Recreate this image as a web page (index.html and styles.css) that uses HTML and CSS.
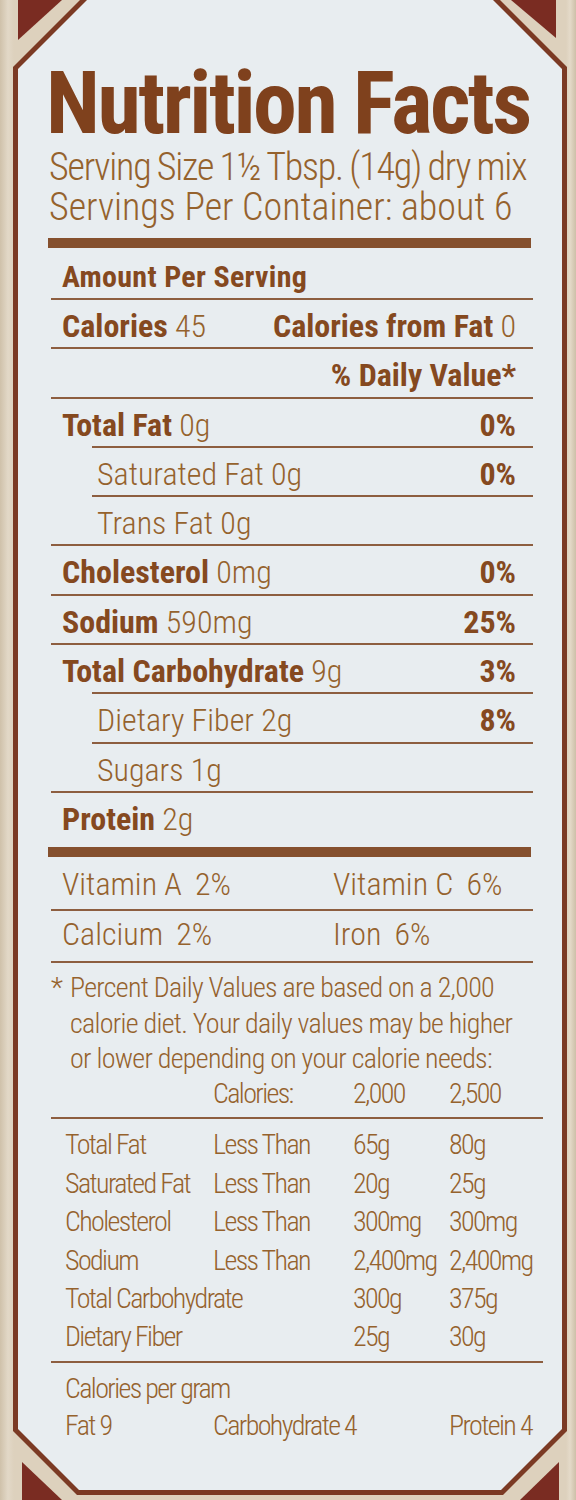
FILE: index.html
```
<!DOCTYPE html>
<html lang="en">
<head>
<meta charset="utf-8">
<title>Nutrition Facts</title>
<link rel="stylesheet" href="styles.css">
</head>
<body>
<div class="corner corner-tl"></div>
<div class="corner corner-tr"></div>
<div class="corner corner-bl"></div>
<div class="corner corner-br"></div>
<div class="frame">
  <div class="panel">
    <div class="content">
      <h1 class="title">Nutrition Facts</h1>
      <p class="serving serving-size">Serving Size 1½ Tbsp. (14g) dry mix</p>
      <p class="serving">Servings Per Container: about 6</p>
      <div class="bar"></div>
      <div class="amount">Amount Per Serving</div>
      <div class="row"><span><b>Calories</b> 45</span><span><b>Calories from Fat</b> 0</span></div>
      <div class="row dv"><span></span><b>% Daily Value*</b></div>
      <div class="row"><span><b>Total Fat</b> 0g</span><b class="pct">0%</b></div>
      <div class="row sub"><span>Saturated Fat 0g</span><b class="pct">0%</b></div>
      <div class="row sub"><span>Trans Fat 0g</span></div>
      <div class="row"><span><b>Cholesterol</b> 0mg</span><b class="pct">0%</b></div>
      <div class="row"><span><b>Sodium</b> 590mg</span><b class="pct">25%</b></div>
      <div class="row"><span><b>Total Carbohydrate</b> 9g</span><b class="pct">3%</b></div>
      <div class="row sub"><span>Dietary Fiber 2g</span><b class="pct">8%</b></div>
      <div class="row sub"><span>Sugars 1g</span></div>
      <div class="row last"><span><b>Protein</b> 2g</span></div>
      <div class="bar bar-low"></div>
      <div class="vit vit-first">
        <span class="vit-item">Vitamin A <span class="vit-val">2%</span></span>
        <span class="vit-item">Vitamin C <span class="vit-val">6%</span></span>
      </div>
      <div class="vit vit-second">
        <span class="vit-item">Calcium <span class="vit-val">2%</span></span>
        <span class="vit-item">Iron <span class="vit-val">6%</span></span>
      </div>
      <div class="foot">
        <div class="note"><span class="star">*</span><span class="note-text">Percent Daily Values are based on a 2,000<br>calorie diet. Your daily values may be higher<br>or lower depending on your calorie needs:</span></div>
        <div class="dvtable dvhead"><span></span><span>Calories:</span><span>2,000</span><span>2,500</span></div>
      </div>
      <div class="dvtable dvbody">
        <span>Total Fat</span><span>Less Than</span><span>65g</span><span>80g</span>
        <span>Saturated Fat</span><span>Less Than</span><span>20g</span><span>25g</span>
        <span>Cholesterol</span><span>Less Than</span><span>300mg</span><span>300mg</span>
        <span>Sodium</span><span>Less Than</span><span>2,400mg</span><span>2,400mg</span>
        <span class="span2">Total Carbohydrate</span><span>300g</span><span>375g</span>
        <span class="span2">Dietary Fiber</span><span>25g</span><span>30g</span>
      </div>
      <div class="pergram">
        <div class="pg-title">Calories per gram</div>
        <div class="dvtable pg-row"><span>Fat 9</span><span class="span2">Carbohydrate 4</span><span>Protein 4</span></div>
      </div>
    </div>
  </div>
</div>
</body>
</html>
```
FILE: styles.css
```
html, body {
  margin: 0;
  padding: 0;
}
body {
  position: relative;
  width: 576px;
  height: 1500px;
  overflow: hidden;
  background: linear-gradient(90deg, #cfc1aa 0, #e2d8c7 8px, #ddd1bd 14px, #ddd1bd 566px, #e4dac9 570px, #cdbfa8 576px);
  font-family: "Roboto", "Liberation Sans", sans-serif;
  font-stretch: condensed;
  color: #95622d;
}

.corner {
  position: absolute;
  background: #7a2c22;
}
.corner-tl { left: 18px; top: 0; width: 44px; height: 40px; clip-path: polygon(0 0, 100% 0, 0 100%); }
.corner-tr { left: 511px; top: 0; width: 45px; height: 38px; clip-path: polygon(0 0, 100% 0, 100% 100%); }
.corner-bl { left: 22px; top: 1462px; width: 40px; height: 38px; clip-path: polygon(0 0, 0 100%, 100% 100%); }
.corner-br { left: 520px; top: 1462px; width: 39px; height: 38px; clip-path: polygon(100% 0, 100% 100%, 0 100%); }

.frame {
  position: relative;
  margin: -5px 0 0 13px;
  width: 554px;
  height: 1500px;
  padding: 5px;
  box-sizing: border-box;
  background: #7b3a24;
  clip-path: polygon(72px 0, calc(100% - 72px) 0, 100% 72px, 100% calc(100% - 64px), calc(100% - 64px) 100%, 64px 100%, 0 calc(100% - 64px), 0 72px);
}
.panel {
  height: 100%;
  background: #e8edf0;
  clip-path: polygon(69px 0, calc(100% - 69px) 0, 100% 69px, 100% calc(100% - 61px), calc(100% - 61px) 100%, 61px 100%, 0 calc(100% - 61px), 0 69px);
  padding: 59px 29px 0 33px;
  box-sizing: border-box;
}

.title {
  margin: 0 0 0 -5px;
  font-size: 88px;
  line-height: 88px;
  font-weight: 700;
  letter-spacing: -2.5px;
  color: #7f411d;
  white-space: nowrap;
}
.serving {
  margin: 0 0 0 -2px;
  font-size: 38px;
  line-height: 40px;
  font-weight: 350;
  white-space: nowrap;
}
.serving-size {
  letter-spacing: -1.2px;
  word-spacing: -1px;
}
.bar {
  height: 10px;
  margin: 11px 2px 0 -3px;
  background: #85502e;
}
.bar-low {
  margin-top: 7px;
}

b { font-weight: 700; color: #85491f; }

.amount {
  padding: 13px 0 5px 11px;
  font-size: 30px;
  line-height: 32px;
  font-weight: 700;
  letter-spacing: 0.3px;
  color: #85491f;
}

.row {
  display: flex;
  justify-content: space-between;
  border-top: 2px solid #8d5e40;
  padding: 10px 17px 5.3px 11px;
  font-size: 32px;
  line-height: 32px;
  font-weight: 350;
  white-space: nowrap;
}
.row.sub {
  margin-left: 41px;
  padding-left: 5px;
}

.vit {
  display: grid;
  grid-template-columns: 271px 1fr;
  padding-left: 11px;
  font-size: 32px;
  line-height: 32px;
  font-weight: 350;
  white-space: nowrap;
}
.vit-first { padding-top: 11px; padding-bottom: 9px; border-bottom: 2px solid #8d5e40; }
.vit-second { padding-top: 7px; padding-bottom: 11px; border-bottom: 2px solid #8d5e40; }
.vit-val { margin-left: 6px; }

.foot {
  padding: 7px 0 6px 0;
  border-bottom: 2px solid #8d5e40;
  margin-right: -10px;
  font-size: 28px;
  line-height: 35.3px;
  font-weight: 350;
}
.note {
  display: flex;
  letter-spacing: -0.7px;
  white-space: nowrap;
}
.star {
  width: 19px;
  flex: none;
}
.note-text {
  flex: 1;
}

.dvtable {
  display: grid;
  grid-template-columns: 148px 140px 96px 1fr;
  padding-left: 14px;
  font-size: 28px;
  letter-spacing: -1.6px;
  font-weight: 350;
  white-space: nowrap;
}
.dvbody {
  line-height: 38.4px;
  padding: 7px 0 4px 14px;
  border-bottom: 2px solid #8d5e40;
  margin-right: -10px;
}
.span2 { grid-column: span 2; }

.pergram {
  padding: 7px 0 0 14px;
  font-size: 28px;
  letter-spacing: -1.6px;
  line-height: 37px;
  font-weight: 350;
}
.pg-row { padding-left: 0; }
```
